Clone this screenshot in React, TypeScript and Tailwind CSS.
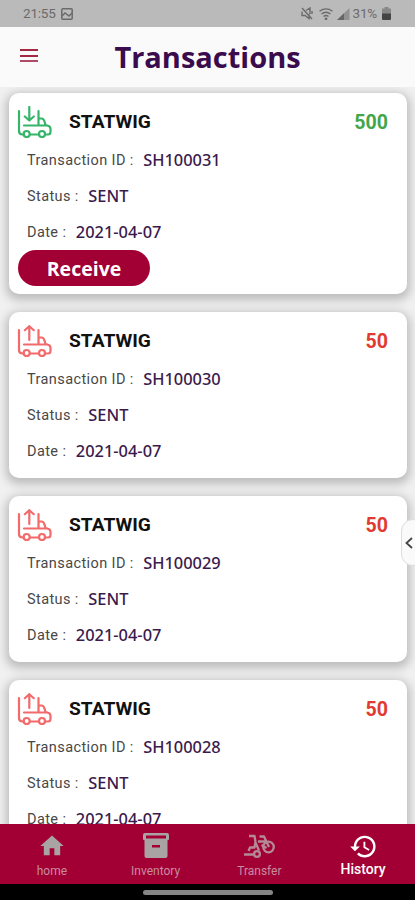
import React from 'react';
import { MdHome, MdHistory } from 'react-icons/md';

type Transaction = { id: string; amount: string; incoming?: boolean };

const transactions: Transaction[] = [
  { id: 'SH100031', amount: '500', incoming: true },
  { id: 'SH100030', amount: '50' },
  { id: 'SH100029', amount: '50' },
  { id: 'SH100028', amount: '50' },
];

function TruckIcon({ incoming }: { incoming?: boolean }) {
  return (
    <svg width="35" height="32" viewBox="0 0 35 32" fill="none" stroke={incoming ? '#35b56a' : '#f26a6a'} strokeWidth="2.200" strokeLinecap="round" strokeLinejoin="round">
      <path d="M2 5v20q0 3.500 3.500 3.500H6.500M13 28.500h8.500M28.500 28.500h2.500q2.500 0 2.500-2.500v-3q0-2.500-2.500-3.200l-2.500-.8-1-3.500q-.8-3-3-3H21.500M21.500 5v14M7 19.500h22" />
      <circle cx="9.700" cy="28" r="3" />
      <circle cx="25" cy="28" r="3" />
      {incoming ? <path d="M12.300 1v13.500M7.800 10.500l4.500 4 4.500-4" /> : <path d="M12.300 15V1.200M7.800 5.200l4.500-4 4.500 4" />}
    </svg>
  );
}

function Row({ label, value }: { label: string; value: string }) {
  return (
    <div className="flex h-9 items-center gap-[9.500px] pl-[18px]">
      <span className="pt-[2px] font-['Roboto',sans-serif] text-[14.500px] tracking-[0.400px] text-[#484848]">{label}</span>
      <span className="pt-px font-['Noto_Sans',sans-serif] text-[16.400px] font-medium text-[#3b1a4d]">{value}</span>
    </div>
  );
}

function Card({ item }: { item: Transaction }) {
  return (
    <section className={`${item.incoming ? 'h-[201px]' : 'h-[166px]'} shrink-0 rounded-[10px] bg-white pt-[9px] shadow-[0_3px_10px_3px_rgba(0,0,0,0.22)]`}>
      <div className="flex h-10 items-center pr-[19px] pl-2 font-['Roboto',sans-serif] text-[19.200px] font-bold">
        <TruckIcon incoming={item.incoming} />
        <span className="ml-[17px] pt-px text-[#111]">STATWIG</span>
        <span className={`ml-auto pt-px text-[19.600px] ${item.incoming ? 'text-[#43a64b]' : 'text-[#df3b32]'}`}>{item.amount}</span>
      </div>
      <Row label="Transaction ID :" value={item.id} />
      <Row label="Status :" value="SENT" />
      <Row label="Date :" value="2021-04-07" />
      {item.incoming && (
        <button className="ml-[9px] flex h-9 w-[132px] items-center justify-center rounded-full bg-[#a20035] pt-px font-['Open_Sans',sans-serif] text-[19.500px] font-bold text-white">Receive</button>
      )}
    </section>
  );
}

function StatusBar() {
  return (
    <div className="flex h-[27px] shrink-0 items-center bg-[#bababa] pr-6 pl-[23px] font-['Roboto',sans-serif] text-[13.500px] text-[#6b6b6b]">
      <span className="tracking-[-0.200px]">21:55</span>
      <svg className="ml-[5px]" width="12" height="12" viewBox="0 0 12 12" fill="none" stroke="currentColor" strokeWidth="1.500">
        <rect x=".8" y=".8" width="10.400" height="10.400" rx="1" />
        <path d="M1 8l3-3 4 3 3-3" />
      </svg>
      <svg className="ml-auto" width="12" height="13" viewBox="0 0 12 13" fill="none" stroke="currentColor" strokeWidth="1.400">
        <path d="M1 1l10 11M1 4.500v4h3l4 3V7M5 3.500L9 1v6M11 4v3" />
      </svg>
      <svg className="ml-[6px]" width="14" height="12" viewBox="0 0 14 12" fill="none" stroke="currentColor" strokeWidth="1.400">
        <path d="M.5 3.200Q7-1.500 13.500 3.200M2.500 6Q7 2.600 11.500 6M4.500 8.500Q7 6.500 9.500 8.500" />
        <circle cx="7" cy="10.800" r=".7" fill="currentColor" />
      </svg>
      <svg className="ml-1" width="13" height="12" viewBox="0 0 13 12">
        <path d="M12.500 0v12H0z" fill="#929292" />
        <path d="M7 5.300V12H0z" fill="#666" />
      </svg>
      <span className="ml-[3px] tracking-[-0.200px]">31%</span>
      <svg className="ml-[5px]" width="9" height="13" viewBox="0 0 9 13">
        <path d="M2.500 0h4v1.500H9V7H0V1.500h2.500z" fill="#888" />
        <path d="M0 6.500h9V12q0 1-1 1H1q-1 0-1-1z" fill="#444" />
      </svg>
    </div>
  );
}

function InventoryIcon() {
  return (
    <svg width="26" height="26" viewBox="0 0 26 26" fill="#a9a3a3">
      <path fillRule="evenodd" d="M2 0h22q2 0 2 2v4q0 1.200-1.500 1.200V23q0 2-2 2h-19q-2 0-2-2V7.200Q0 7.200 0 6V2q0-2 2-2zm1 2.500v3h20v-3zM9 12v2.500h8V12z" />
    </svg>
  );
}

function TransferIcon() {
  return (
    <svg width="31" height="25" viewBox="0 0 31 25" fill="none" stroke="#b58a96" strokeWidth="2.300" strokeLinejoin="round">
      <path d="M5 2h5.500l1 6-1 5.500H6L4.500 17M0 20.500h9.500M11.500 8.500l3.500 8M15.500 2.500H20l5 10.500M14 7.500h8M17.500 11l5 3" />
      <circle cx="13" cy="20" r="2.900" />
      <circle cx="24.500" cy="13" r="5.300" />
    </svg>
  );
}

function NavItem({ label, active, children }: { label: string; active?: boolean; children: React.ReactNode }) {
  return (
    <div className={`flex flex-1 flex-col items-center pt-[7px] font-['Roboto',sans-serif] ${active ? 'text-[14px] font-medium text-white' : 'text-[12px] text-[#c88c9f]'}`}>
      <div className="flex h-[30px] items-center justify-center">{children}</div>
      <span className={active ? 'leading-[17px]' : 'pt-px leading-[18px]'}>{label}</span>
    </div>
  );
}

export default function App() {
  return (
    <div className="relative flex h-[900px] w-[415px] flex-col overflow-hidden bg-[#f0f0f0]">
      <StatusBar />
      <header className="relative flex h-[60px] shrink-0 items-center justify-center bg-[#fafafa]">
        <div className="absolute top-[22px] left-[20px] flex w-[18px] flex-col gap-[3.500px]">
          <span className="h-[2px] bg-[#a32943]" />
          <span className="h-[2px] bg-[#a32943]" />
          <span className="h-[2px] bg-[#ae4b68]" />
        </div>
        <h1 className="font-['Open_Sans',sans-serif] text-[29px] leading-[40px] font-bold text-[#3b0c4d]">Transactions</h1>
      </header>
      <main className="flex min-h-0 flex-1 flex-col gap-[18px] overflow-hidden pt-[6px] pr-2 pl-[9px]">
        {transactions.map((item) => <Card key={item.id} item={item} />)}
      </main>
      <div className="absolute top-[519px] right-[-10px] flex h-[47px] w-[24px] items-center rounded-[12px] border border-[#ddd] bg-[#fafafa] pl-[3px]">
        <svg width="8" height="12" viewBox="0 0 8 12" fill="none" stroke="#444" strokeWidth="1.800"><path d="M7 1L1.500 6 7 11" /></svg>
      </div>
      <nav className="relative flex h-[60px] shrink-0 bg-[#a20035]">
        <NavItem label="home"><MdHome size={28} color="#a9a3a3" /></NavItem>
        <NavItem label="Inventory"><InventoryIcon /></NavItem>
        <NavItem label="Transfer"><TransferIcon /></NavItem>
        <NavItem label="History" active><MdHistory size={29} /></NavItem>
      </nav>
      <div className="flex h-4 shrink-0 justify-center bg-black pt-[6px]">
        <div className="h-[5px] w-[130px] rounded-full bg-[#858585]" />
      </div>
    </div>
  );
}
